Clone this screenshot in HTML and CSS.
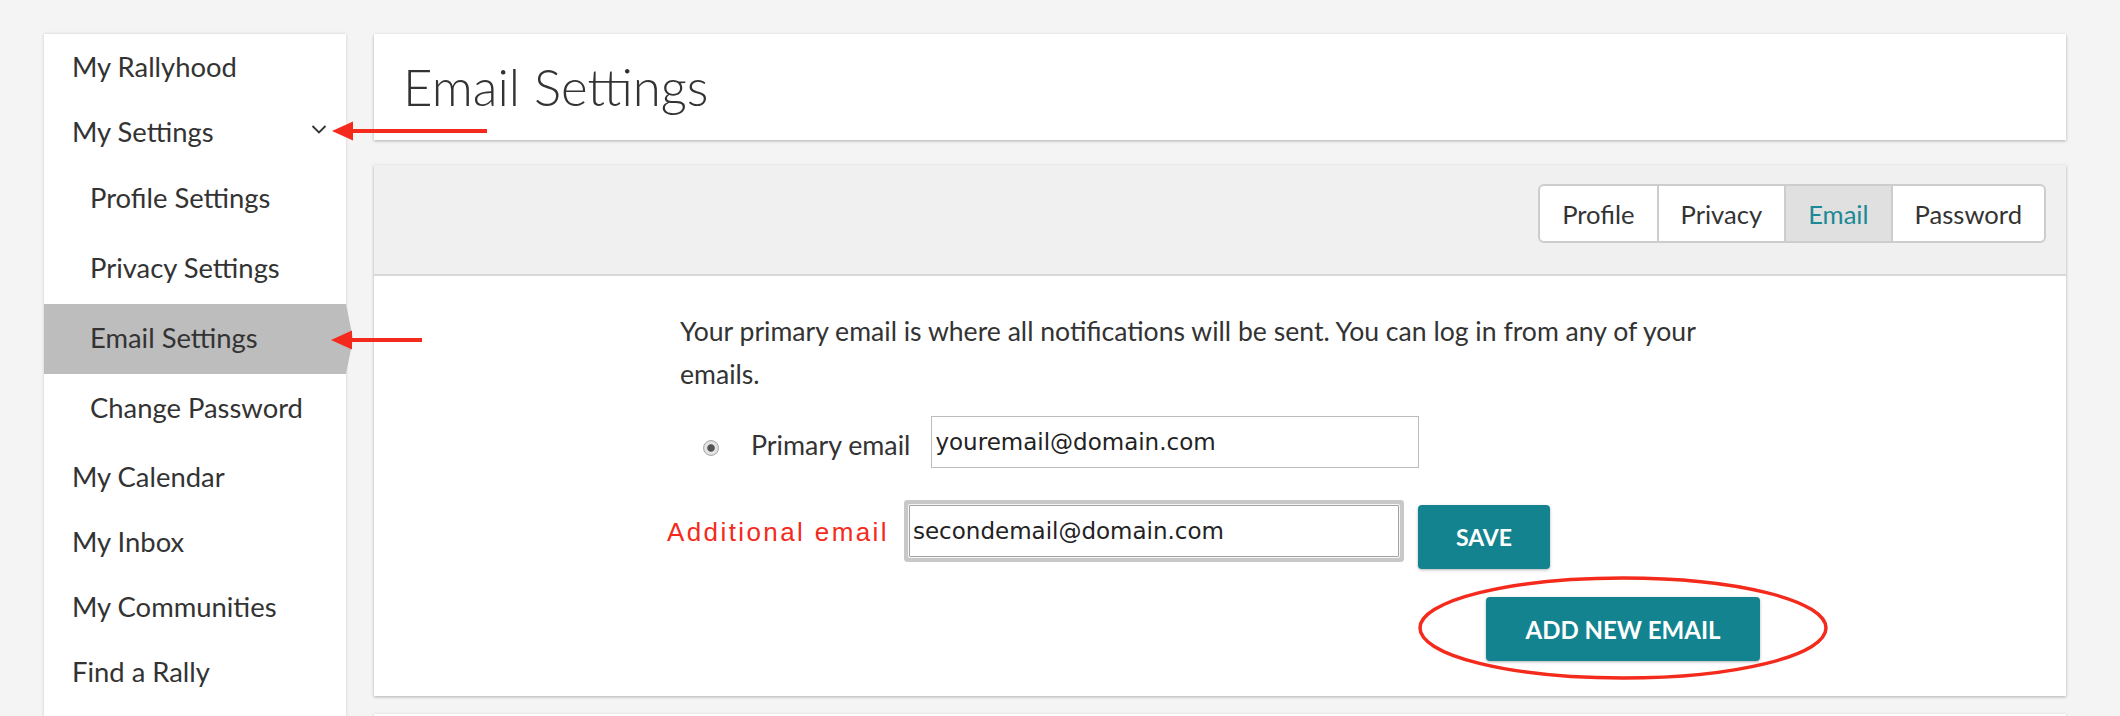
FILE: index.html
```html
<!DOCTYPE html>
<html lang="en">
<head>
<meta charset="utf-8">
<title>Email Settings</title>
<link rel="stylesheet" href="styles.css">
</head>
<body>
<div class="page">
  <nav class="sidebar">
    <a class="nav-item">My Rallyhood</a>
    <a class="nav-item">My Settings
      <svg class="caret" viewBox="0 0 16 9" width="16" height="9"><polyline points="1.5,1 8,7.5 14.5,1" /></svg>
    </a>
    <a class="nav-sub">Profile Settings</a>
    <a class="nav-sub">Privacy Settings</a>
    <a class="nav-sub active">Email Settings</a>
    <a class="nav-sub">Change Password</a>
    <a class="nav-item">My Calendar</a>
    <a class="nav-item">My Inbox</a>
    <a class="nav-item">My Communities</a>
    <a class="nav-item">Find a Rally</a>
  </nav>

  <main class="main">
    <section class="card title-card">
      <h1>Email Settings</h1>
    </section>

    <section class="card settings-card">
      <div class="card-head">
        <div class="tabs">
          <span class="tab">Profile</span>
          <span class="tab">Privacy</span>
          <span class="tab current">Email</span>
          <span class="tab">Password</span>
        </div>
      </div>
      <div class="card-body">
        <div class="form-col">
          <p class="intro">Your primary email is where all notifications will be sent. You can log in from any of your emails.</p>
          <div class="primary-row">
            <span class="radio"></span>
            <span class="primary-label">Primary email</span>
            <input class="email-input primary-input" type="text" value="youremail@domain.com">
          </div>
          <div class="add-row">
            <span class="add-label">Additional email</span>
            <input class="email-input add-input" type="text" value="secondemail@domain.com">
            <button class="btn save">SAVE</button>
          </div>
          <div class="new-row">
            <button class="btn add-new">ADD NEW EMAIL</button>
          </div>
        </div>
      </div>
    </section>

    <section class="card next-card"></section>
  </main>

  <svg class="annotations" viewBox="0 0 2120 716" width="2120" height="716">
    <line x1="350" y1="131" x2="487" y2="131" />
    <polygon points="332,131 353,121.5 353,140.5" />
    <line x1="349" y1="340" x2="422" y2="340" />
    <polygon points="331,340 352,330.5 352,349.5" />
    <ellipse cx="1623" cy="628" rx="203" ry="50" />
  </svg>
</div>
</body>
</html>
```

FILE: styles.css
```css
html, body {
  margin: 0;
  height: 716px;
  overflow: hidden;
}

body {
  background: #f4f4f4;
  font-family: Lato, "Open Sans", sans-serif;
  color: #333;
}

.page {
  position: relative;
  display: flex;
  gap: 28px;
  padding: 34px 54px 0 44px;
}

/* Sidebar */
.sidebar {
  flex: none;
  width: 302px;
  background: #fff;
  box-shadow: 0 0 3px rgba(0, 0, 0, 0.16);
  display: flex;
  flex-direction: column;
  padding-bottom: 80px;
}

.nav-item,
.nav-sub {
  display: flex;
  align-items: center;
  font-size: 27.4px;
  color: #333;
  box-sizing: border-box;
  position: relative;
}

.nav-item {
  height: 65px;
  padding: 0 19px 0 28px;
  justify-content: space-between;
}

.nav-sub {
  height: 70px;
  padding: 0 0 4px 46px;
}

.nav-sub.active {
  background: #bdbdbd;
}

.nav-sub.active::after {
  content: "";
  position: absolute;
  right: -7px;
  top: 0;
  width: 0;
  height: 0;
  border-left: 7px solid #bdbdbd;
  border-top: 35px solid transparent;
  border-bottom: 35px solid transparent;
}

.caret {
  margin-top: -4px;
}

.caret polyline {
  fill: none;
  stroke: #333;
  stroke-width: 1.8;
}

/* Main column */
.main {
  flex: 1;
  display: flex;
  flex-direction: column;
}

.card {
  background: #fff;
  box-shadow: 0 1px 3px rgba(0, 0, 0, 0.28);
}

.title-card {
  height: 106px;
  box-sizing: border-box;
  padding: 22px 29px 0;
  margin-bottom: 25px;
}

.title-card h1 {
  margin: 0;
  font-size: 51px;
  font-weight: 300;
  line-height: 1.2;
  color: #333;
}

.settings-card {
  margin-bottom: 18px;
}

.card-head {
  height: 111px;
  box-sizing: border-box;
  background: #f0f0f0;
  border-bottom: 2px solid #d9d9d9;
  padding: 19px 20px 0;
  display: flex;
  justify-content: flex-end;
  align-items: flex-start;
}

.tabs {
  display: flex;
  height: 59px;
  box-sizing: border-box;
  border: 2px solid #cdcdcd;
  border-radius: 6px;
  overflow: hidden;
  background: #fff;
}

.tab {
  display: flex;
  align-items: center;
  padding: 0 22px;
  font-size: 25.6px;
  color: #333;
}

.tab + .tab {
  border-left: 2px solid #cdcdcd;
}

.tab.current {
  background: #e0e0e0;
  color: #1b8996;
}

.card-body {
  padding: 34px 0 35px 306px;
}

.form-col {
  width: 1080px;
}

.intro {
  margin: 0;
  font-size: 26.6px;
  line-height: 43px;
  color: #333;
}

.primary-row {
  display: flex;
  align-items: flex-start;
  margin-top: 20px;
  padding-left: 23px;
}

.radio {
  flex: none;
  width: 16px;
  height: 16px;
  box-sizing: border-box;
  margin-top: 24px;
  border-radius: 50%;
  border: 1px solid #a9a9a9;
  background: radial-gradient(circle, #555 0 3.3px, #e8e8e8 4.3px, #d2d2d2 100%);
}

.primary-label {
  margin-left: 32px;
  margin-top: 14px;
  font-size: 26.8px;
  line-height: 30px;
  color: #333;
}

.email-input {
  height: 52px;
  box-sizing: border-box;
  padding: 0 3px;
  font-family: "DejaVu Sans", Verdana, sans-serif;
  font-size: 23px;
  color: #222;
  background: #fff;
  outline: none;
}

.primary-input {
  width: 488px;
  margin-left: 21px;
  border: 1px solid #bcbcbc;
}

.add-row {
  display: flex;
  align-items: flex-start;
  margin-top: 37px;
  margin-left: -13px;
}

.add-label {
  margin-top: 12px;
  font-family: "Liberation Sans", Arial, sans-serif;
  font-size: 26px;
  line-height: 30px;
  letter-spacing: 2.4px;
  color: #f42a1c;
}

.add-input {
  width: 490px;
  margin-left: 20px;
  border: 1px solid #a3a3a3;
  border-radius: 1px;
  box-shadow: 0 0 0 1px #f6f6f6, 0 0 0 5px #c8c8c8;
}

.btn {
  height: 64px;
  border: none;
  border-radius: 4px;
  background: #13848f;
  color: #fff;
  font-family: Lato, sans-serif;
  font-weight: 700;
  font-size: 23px;
  box-shadow: 0 1px 3px rgba(0, 0, 0, 0.3);
  padding: 0;
}

.save {
  width: 132px;
  margin-left: 19px;
}

.new-row {
  display: flex;
  justify-content: flex-end;
  margin-top: 28px;
}

.add-new {
  width: 274px;
  font-size: 24px;
}

.next-card {
  height: 120px;
}

/* Red annotation marks drawn over the screenshot */
.annotations {
  position: absolute;
  left: 0;
  top: 0;
  pointer-events: none;
}

.annotations line {
  stroke: #f42a1c;
  stroke-width: 4;
}

.annotations polygon {
  fill: #f42a1c;
}

.annotations ellipse {
  fill: none;
  stroke: #f42a1c;
  stroke-width: 3.5;
}
```
